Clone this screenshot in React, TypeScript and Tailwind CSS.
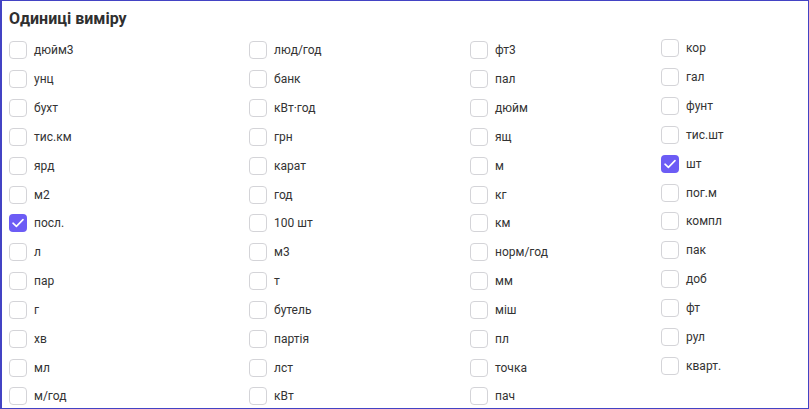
const columns: { items: string[]; offset: string }[] = [
  {
    items: ['дюйм3', 'унц', 'бухт', 'тис.км', 'ярд', 'м2', 'посл.', 'л', 'пар', 'г', 'хв', 'мл', 'м/год'],
    offset: 'mt-0',
  },
  {
    items: ['люд/год', 'банк', 'кВт·год', 'грн', 'карат', 'год', '100 шт', 'м3', 'т', 'бутель', 'партія', 'лст', 'кВт'],
    offset: 'mt-0',
  },
  {
    items: ['фт3', 'пал', 'дюйм', 'ящ', 'м', 'кг', 'км', 'норм/год', 'мм', 'міш', 'пл', 'точка', 'пач'],
    offset: 'mt-0',
  },
  {
    items: ['кор', 'гал', 'фунт', 'тис.шт', 'шт', 'пог.м', 'компл', 'пак', 'доб', 'фт', 'рул', 'кварт.'],
    offset: '-mt-[2px]',
  },
];

const checked = ['посл.', 'шт'];

function Checkbox({ on }: { on: boolean }) {
  if (on) {
    return (
      <span className="w-[18px] h-[18px] rounded-[4px] bg-[#6c5cf5] flex items-center justify-center shrink-0">
        <svg width="14" height="14" viewBox="0 0 14 14" fill="none">
          <path d="M2 7.2 L5.4 10.4 L12 3.6" stroke="white" strokeWidth="1.6" strokeLinecap="round" strokeLinejoin="round" />
        </svg>
      </span>
    );
  }
  return <span className="block w-[18px] h-[18px] rounded-[4px] border border-[#d4d4d8] bg-white shrink-0" />;
}

export default function App() {
  return (
    <div className="w-[809px] h-[409px] bg-white font-['Roboto',sans-serif] text-[#333] border border-l-2 border-[#4343c4] overflow-hidden">
      <h2 className="text-[16px] font-bold leading-none pl-[7px] pt-[10px] text-[#2f2f2f]">Одиниці виміру</h2>
      <div className="grid grid-cols-[240px_221px_191px_1fr] pl-[7px] mt-[9px]">
        {columns.map((col, ci) => (
          <div key={ci} className={`flex flex-col ${col.offset}`}>
            {col.items.map((label) => (
              <label key={label} className="flex items-center gap-[7px] h-[28.83px] text-[12px]">
                <Checkbox on={checked.includes(label)} />
                <span>{label}</span>
              </label>
            ))}
          </div>
        ))}
      </div>
    </div>
  );
}
